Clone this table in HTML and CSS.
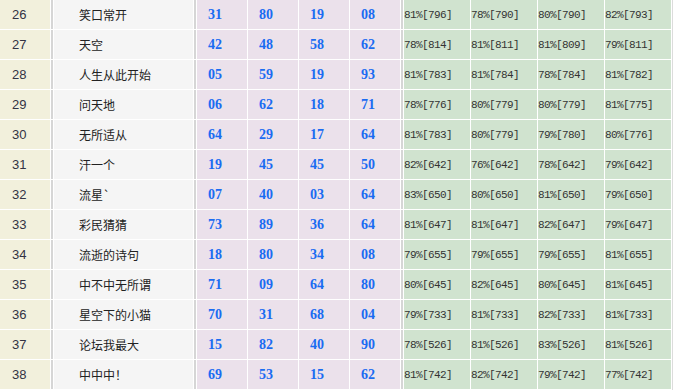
FILE: index.html
```html
<!DOCTYPE html>
<html>
<head>
<meta charset="utf-8">
<link rel="stylesheet" href="styles.css">
</head>
<body>
<div class="grid" id="g"></div>
<script>
var rows = [
["26","笑口常开",["31","80","19","08"],["81%[796]","78%[790]","80%[790]","82%[793]"]],
["27","天空",["42","48","58","62"],["78%[814]","81%[811]","81%[809]","79%[811]"]],
["28","人生从此开始",["05","59","19","93"],["81%[783]","81%[784]","78%[784]","81%[782]"]],
["29","问天地",["06","62","18","71"],["78%[776]","80%[779]","80%[779]","81%[775]"]],
["30","无所适从",["64","29","17","64"],["81%[783]","80%[779]","79%[780]","80%[776]"]],
["31","汗一个",["19","45","45","50"],["82%[642]","76%[642]","78%[642]","79%[642]"]],
["32","流星`",["07","40","03","64"],["83%[650]","80%[650]","81%[650]","79%[650]"]],
["33","彩民猜猜",["73","89","36","64"],["81%[647]","81%[647]","82%[647]","79%[647]"]],
["34","流逝的诗句",["18","80","34","08"],["79%[655]","79%[655]","79%[655]","81%[655]"]],
["35","中不中无所谓",["71","09","64","80"],["80%[645]","82%[645]","80%[645]","81%[645]"]],
["36","星空下的小猫",["70","31","68","04"],["79%[733]","81%[733]","82%[733]","81%[733]"]],
["37","论坛我最大",["15","82","40","90"],["78%[526]","81%[526]","83%[526]","81%[526]"]],
["38","中中中！",["69","53","15","62"],["81%[742]","82%[742]","79%[742]","77%[742]"]]
];
var g = document.getElementById("g");
function cell(cls, txt){ var d=document.createElement("div"); d.className="c "+cls; if(txt!==undefined) d.textContent=txt; g.appendChild(d); }
rows.forEach(function(r){
  cell("num", r[0]);
  cell("sep");
  cell("name", r[1]);
  cell("sep");
  r[2].forEach(function(n){ cell("ball", n); });
  cell("sep");
  r[3].forEach(function(p){ cell("pct", p); });
});
</script>
</body>
</html>
```
FILE: styles.css
```css
html, body {
  margin: 0;
  padding: 0;
  background: #ffffff;
}
.grid {
  display: grid;
  grid-template-columns: 50px 2px 139px 2px 50px 50px 50px 50px 2px 66px 66px 66px 66px;
  grid-auto-rows: 29px;
  gap: 1px;
  padding: 1px;
  background: #ffffff;
  border-right: 1px solid #dcdcdc;
  border-bottom: 1px solid #dcdcdc;
  width: max-content;
  margin-top: -1px;
  margin-left: -1px;
}
.c {
  display: flex;
  align-items: center;
  overflow: hidden;
  white-space: nowrap;
}
.num {
  background: #f2f0dc;
  padding-left: 12px;
  font-family: "Liberation Sans", Arial, sans-serif;
  font-size: 13px;
  color: #333344;
}
.sep {
  background: #d6d6d6;
}
.name {
  background: #f5f5f5;
  padding-left: 25px;
  font-family: "Noto Sans CJK SC", sans-serif;
  font-size: 12px;
  color: #222222;
}
.ball {
  background: #ebe1eb;
  padding-left: 11px;
  font-family: "Liberation Serif", "Times New Roman", serif;
  font-weight: bold;
  font-size: 14px;
  color: #1a6cf2;
}
.pct {
  background: #d0e3cf;
  font-family: "Liberation Mono", monospace;
  font-size: 11px;
  letter-spacing: -0.6px;
  color: #333333;
}
```
